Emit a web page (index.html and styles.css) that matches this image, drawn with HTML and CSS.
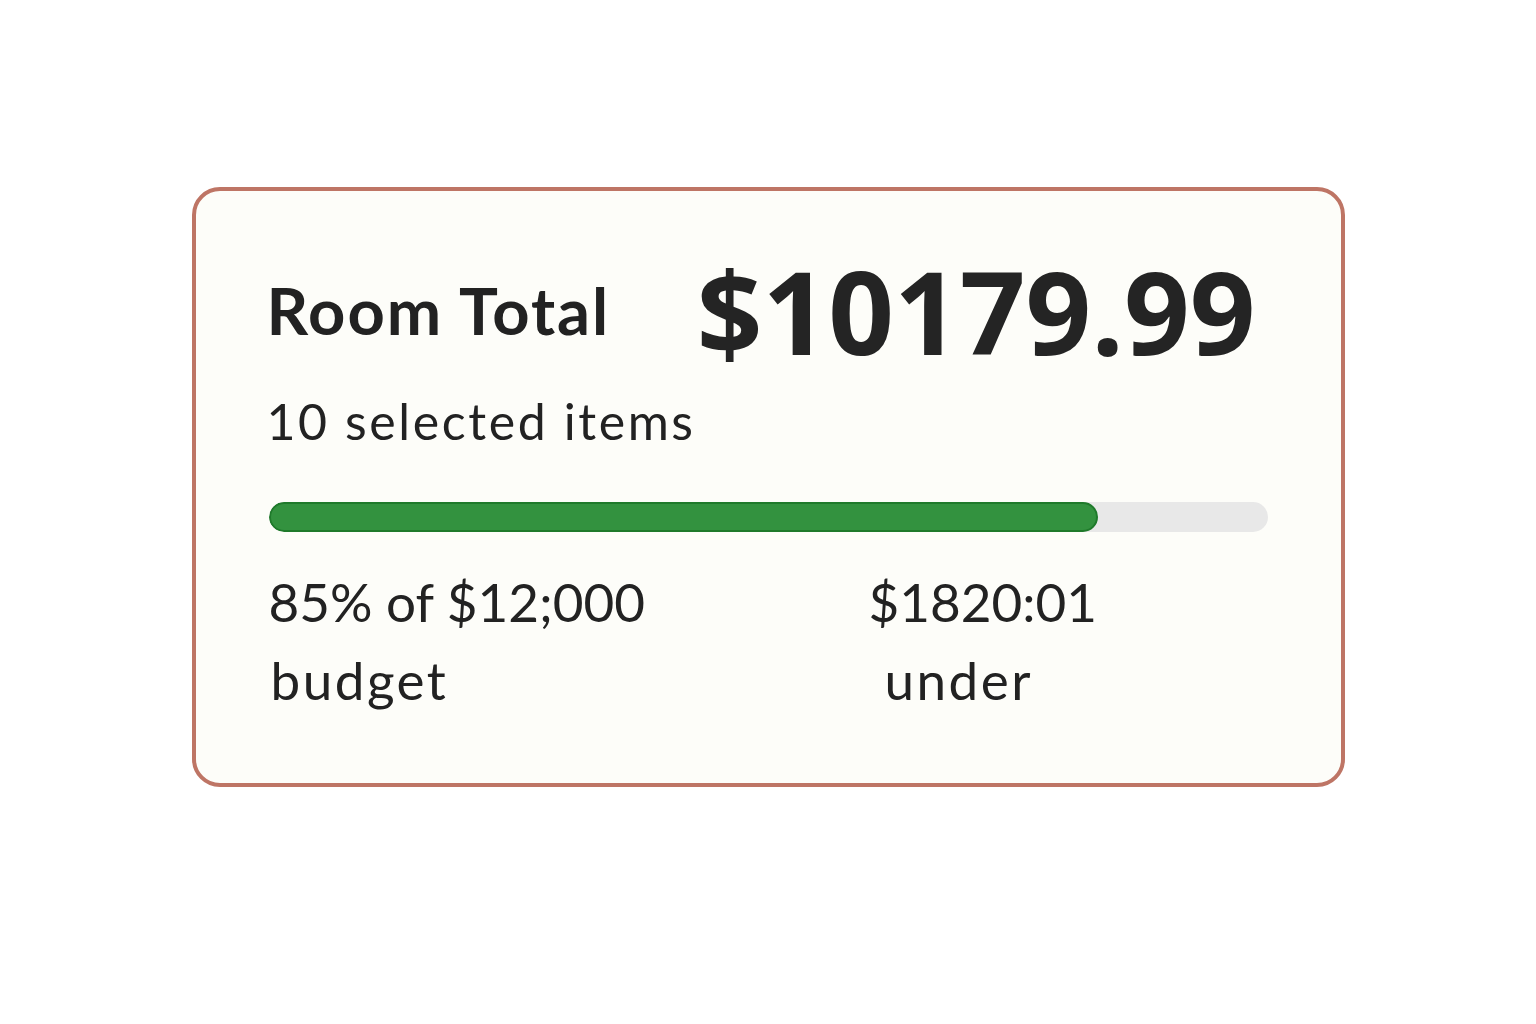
FILE: index.html
```html
<!DOCTYPE html>
<html lang="en">
<head>
<meta charset="UTF-8" />
<meta name="viewport" content="width=device-width, initial-scale=1" />
<title>Room Total</title>
<link rel="stylesheet" href="styles.css">
</head>
<body>
  <section class="card" aria-label="Room budget summary">
    <div class="card-head">
      <h1 class="title">Room Total</h1>
      <div class="amount">$10179.99</div>
    </div>

    <p class="count">10 selected items</p>

    <div class="progress" role="progressbar" aria-valuenow="85" aria-valuemin="0" aria-valuemax="100">
      <div class="progress-fill" style="width: 83%"></div>
    </div>

    <div class="stats">
      <div class="stat">
        <span class="stat-value">85% of $12;000</span>
        <span class="stat-label">budget</span>
      </div>
      <div class="stat">
        <span class="stat-value">$1820:01</span>
        <span class="stat-label indent">under</span>
      </div>
    </div>
  </section>
</body>
</html>
```

FILE: styles.css
```css
* {
  box-sizing: border-box;
}

body {
  margin: 0;
  padding-top: 187px;
  background: #fff;
  color: #222;
  font-family: Lato, "Open Sans", sans-serif;
}

.card {
  width: 1153px;
  height: 600px;
  margin: 0 auto;
  padding: 62px 71px 0 71px;
  background: #fdfdf9;
  border: 4px solid #be7565;
  border-radius: 28px;
}

.card-head {
  display: flex;
  align-items: center;
  justify-content: space-between;
  padding-right: 14px;
}

.title {
  margin: 0;
  font-size: 65px;
  font-weight: 700;
  letter-spacing: 2px;
  line-height: 1;
  color: #222;
}

.amount {
  font-family: "Open Sans", sans-serif;
  font-size: 115px;
  font-weight: 700;
  line-height: 1;
  color: #242424;
}

.count {
  margin: 23px 0 0;
  font-size: 50px;
  letter-spacing: 2.6px;
  line-height: 1.2;
}

.progress {
  margin: 51px 2px 0;
  height: 30px;
  background: #e8e8e8;
  border-radius: 15px;
  overflow: hidden;
}

.progress-fill {
  height: 100%;
  background: #33923f;
  border: 2px solid #1f7a2b;
  border-radius: 15px;
}

.stats {
  display: grid;
  grid-template-columns: 600px 1fr;
  margin-top: 31px;
  font-size: 53px;
  line-height: 78px;
}

.stat-value,
.stat-label {
  display: block;
  padding-left: 2px;
}

.stat-label {
  padding-left: 4px;
  letter-spacing: 2.5px;
}

.stat-label.indent {
  padding-left: 18px;
}
```
